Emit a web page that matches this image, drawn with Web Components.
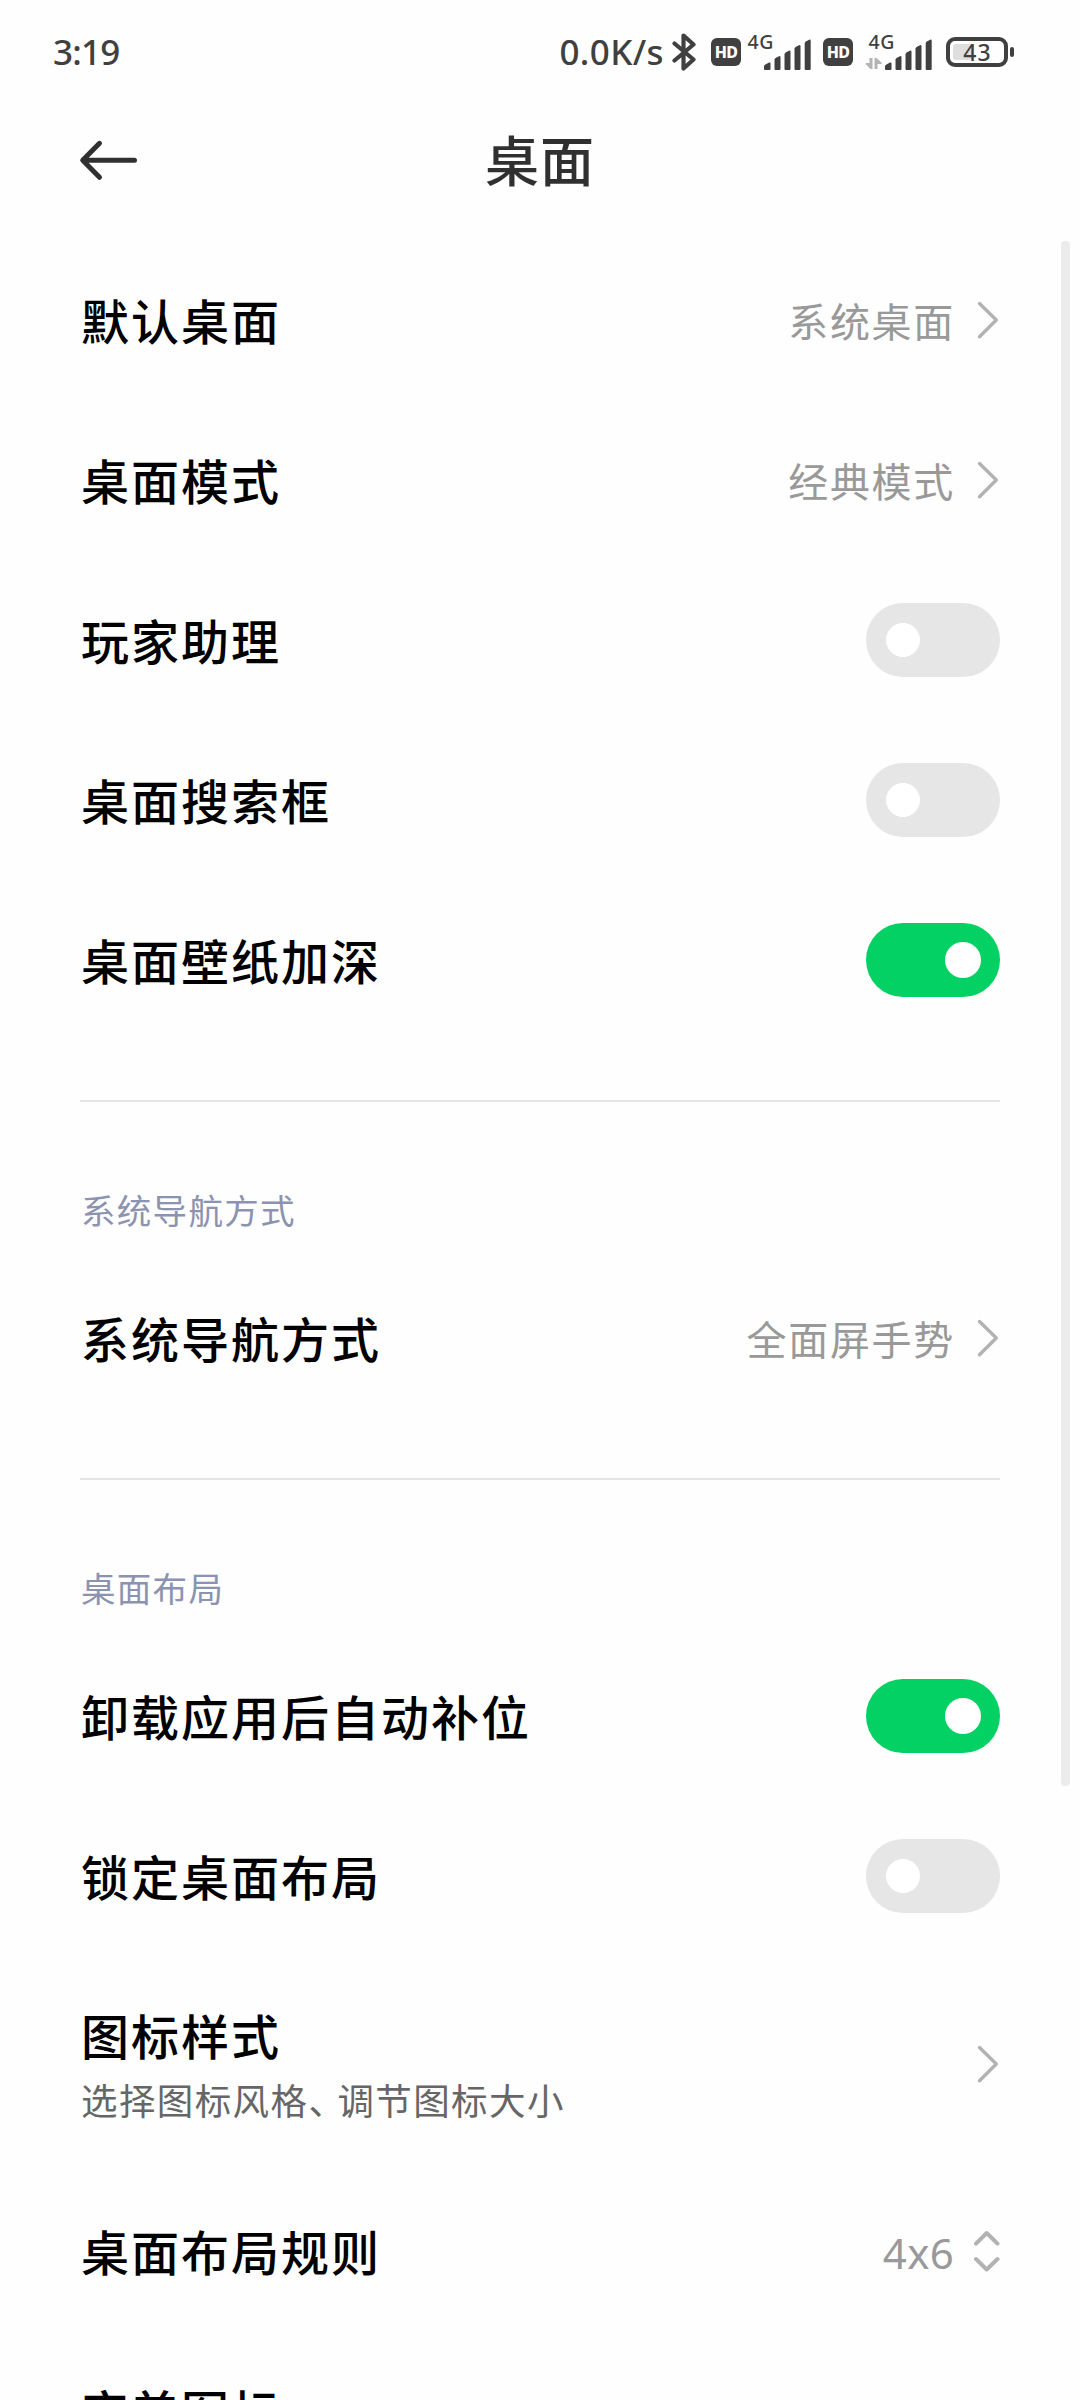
<!DOCTYPE html>
<html lang="zh-CN">
<head>
<meta charset="utf-8">
<title>桌面</title>
<style>
    html, body {
        margin: 0;
        height: 2400px;
        overflow: hidden;
        background: #fefefe;
        font-family: "Noto Sans", "Noto Sans CJK SC", sans-serif;
    }
</style>
</head>
<body>
<settings-page>
    <status-bar slot="status" time="3:19" speed="0.0K/s" battery="43"></status-bar>
    <title-bar slot="title">桌面</title-bar>

    <pref-group>
        <pref-row label="默认桌面" value="系统桌面" icon="chevron"></pref-row>
        <pref-row label="桌面模式" value="经典模式" icon="chevron"></pref-row>
        <pref-row label="玩家助理"><toggle-switch></toggle-switch></pref-row>
        <pref-row label="桌面搜索框"><toggle-switch></toggle-switch></pref-row>
        <pref-row label="桌面壁纸加深"><toggle-switch checked></toggle-switch></pref-row>
    </pref-group>

    <pref-group heading="系统导航方式">
        <pref-row label="系统导航方式" value="全面屏手势" icon="chevron"></pref-row>
    </pref-group>

    <pref-group heading="桌面布局">
        <pref-row label="卸载应用后自动补位"><toggle-switch checked></toggle-switch></pref-row>
        <pref-row label="锁定桌面布局"><toggle-switch></toggle-switch></pref-row>
        <pref-row label="图标样式" summary="选择图标风格、调节图标大小" icon="chevron"></pref-row>
        <pref-row label="桌面布局规则" value="4x6" icon="updown"></pref-row>
        <pref-row label="完美图标"></pref-row>
    </pref-group>
</settings-page>

<script>
class SettingsPage extends HTMLElement {
    constructor() {
        super();
        this.attachShadow({ mode: "open" });

        this.shadowRoot.innerHTML = `
            <style>
                :host {
                    display: flex;
                    flex-direction: column;
                    position: relative;
                    width: 1080px;
                    height: 2400px;
                    overflow: hidden;
                }

                .list {
                    flex: 1;
                    min-height: 0;
                    padding: 0 80px;
                    overflow: hidden;
                }

                .scrollbar {
                    position: absolute;
                    top: 241px;
                    right: 10px;
                    width: 9px;
                    height: 1545px;
                    border-radius: 4px;
                    background: #ececec;
                }
            </style>

            <slot name="status"></slot>
            <slot name="title"></slot>
            <div class="list"><slot></slot></div>
            <div class="scrollbar"></div>
        `;
    }
}

class HdBadge extends HTMLElement {
    constructor() {
        super();
        this.attachShadow({ mode: "open" });

        this.shadowRoot.innerHTML = `
            <style>
                :host {
                    display: flex;
                    align-items: center;
                    justify-content: center;
                    width: 30px;
                    height: 28px;
                    border-radius: 6px;
                    background: #404040;
                    color: #fefefe;
                    font-size: 16px;
                    font-weight: 800;
                    line-height: 28px;
                    letter-spacing: -0.8px;
                }
            </style>
            <span>HD</span>
        `;
    }
}

class SignalMeter extends HTMLElement {
    constructor() {
        super();
        this.attachShadow({ mode: "open" });

        this.shadowRoot.innerHTML = `
            <style>
                :host {
                    display: block;
                    position: relative;
                    width: 68px;
                    height: 40px;
                }

                span {
                    position: absolute;
                    left: 4px;
                    top: 0;
                    font-size: 19.5px;
                    font-weight: 500;
                    line-height: 22px;
                    letter-spacing: 0.5px;
                    color: #404040;
                }

                svg {
                    display: block;
                }

                .arrows {
                    display: none;
                }

                :host([data]) .arrows {
                    display: inline;
                }
            </style>

            <svg width="68" height="40" viewBox="0 0 68 40" fill="#404040">
                <path d="M20 38v-2.500q0-1.200 1-1.700l4-2.200q1.500-.6 1.500 1V38q0 1-1 1H21q-1 0-1-1z"/>
                <path d="M30.500 38V28.500l1-1.500 3.500-1.800q1.500-.4 1.500 1V38q0 1-1 1h-4q-1 0-1-1z"/>
                <path d="M40.500 38V23l1-1.500 3.500-1.800q1.500-.4 1.500 1V38q0 1-1 1h-4q-1 0-1-1z"/>
                <path d="M50.500 38V17.500l1-1.500 3.500-1.800q1.500-.4 1.500 1V38q0 1-1 1h-4q-1 0-1-1z"/>
                <path d="M60.700 38V12l1-1.500 3.500-1.800q1.500-.4 1.500 1V38q0 1-1 1h-4q-1 0-1-1z"/>
                <g class="arrows" fill="#b4b4b4">
                    <path d="M4.500 27h3v11h-2L.8 33.200V32h3.700z"/>
                    <path d="M9.500 38h3V33h4.200v-1.200L11.500 27h-2z"/>
                </g>
            </svg>
            <span>4G</span>
        `;
    }
}

class BatteryMeter extends HTMLElement {
    static get observedAttributes() {
        return ["level"];
    }

    constructor() {
        super();
        this.attachShadow({ mode: "open" });

        this.shadowRoot.innerHTML = `
            <style>
                :host {
                    display: flex;
                    align-items: center;
                    gap: 2px;
                }

                .case {
                    display: grid;
                    box-sizing: border-box;
                    width: 62px;
                    height: 30px;
                    padding: 3px;
                    border: 4px solid #404040;
                    border-radius: 9px;
                }

                .fill, .level {
                    grid-area: 1 / 1;
                }

                .fill {
                    width: 19px;
                    border-radius: 3px;
                    background: #dedede;
                }

                .level {
                    justify-self: center;
                    padding-left: 1px;
                    color: #404040;
                    font-size: 23px;
                    font-weight: 500;
                    line-height: 16px;
                    letter-spacing: 1px;
                }

                .tip {
                    width: 4px;
                    height: 10px;
                    border-radius: 2px;
                    background: #404040;
                }
            </style>

            <div class="case">
                <div class="fill"></div>
                <div class="level"></div>
            </div>
            <div class="tip"></div>
        `;
    }

    attributeChangedCallback(name, old, val) {
        this.shadowRoot.querySelector(".level").textContent = val;
    }
}

class StatusBar extends HTMLElement {
    constructor() {
        super();
        this.attachShadow({ mode: "open" });

        this.shadowRoot.innerHTML = `
            <style>
                :host {
                    display: flex;
                    align-items: center;
                    box-sizing: border-box;
                    height: 104px;
                    padding: 0 66px 0 53px;
                    color: #404040;
                    font-size: 35px;
                    font-weight: 500;
                    line-height: 40px;
                }

                .time {
                    letter-spacing: -0.8px;
                }

                .speed {
                    margin-left: auto;
                    letter-spacing: 0.4px;
                }

                .bluetooth {
                    margin: 0 14px 0 8px;
                }

                signal-meter {
                    margin: -2px 11.5px 0 2.5px;
                }

                signal-meter[data] {
                    margin: -2px 13.5px 0 11.5px;
                }
            </style>

            <span class="time"></span>
            <span class="speed"></span>
            <svg class="bluetooth" width="25" height="40" viewBox="0 0 25 40" fill="none" stroke="#404040" stroke-width="4.200" stroke-linecap="round" stroke-linejoin="round">
                <path d="M2.500 11.500L21.500 27.500 11.500 36.500V3.500L21.500 12.500 2.500 28.500"/>
            </svg>
            <hd-badge></hd-badge>
            <signal-meter></signal-meter>
            <hd-badge></hd-badge>
            <signal-meter data></signal-meter>
            <battery-meter></battery-meter>
        `;
    }

    connectedCallback() {
        this.shadowRoot.querySelector(".time").textContent = this.getAttribute("time");
        this.shadowRoot.querySelector(".speed").textContent = this.getAttribute("speed");
        this.shadowRoot.querySelector("battery-meter").setAttribute("level", this.getAttribute("battery"));
    }
}

class TitleBar extends HTMLElement {
    constructor() {
        super();
        this.attachShadow({ mode: "open" });

        this.shadowRoot.innerHTML = `
            <style>
                :host {
                    display: grid;
                    grid-template-columns: 1fr auto 1fr;
                    align-items: center;
                    height: 112px;
                    margin-bottom: 24px;
                    padding: 0 76px;
                    color: #303030;
                    font-size: 54px;
                    font-weight: 500;
                    line-height: 70px;
                    letter-spacing: 1px;
                }

                span {
                    padding-top: 2px;
                }
            </style>

            <svg width="64" height="44" viewBox="0 0 64 44" fill="none" stroke="#303030" stroke-width="5" stroke-linecap="round" stroke-linejoin="round">
                <path d="M58.500 22.300H7M23.500 5.300L6.700 22.300l16.800 17"/>
            </svg>
            <span><slot></slot></span>
        `;
    }
}

class PrefGroup extends HTMLElement {
    constructor() {
        super();
        this.attachShadow({ mode: "open" });

        this.shadowRoot.innerHTML = `
            <style>
                :host {
                    display: block;
                    padding-bottom: 60px;
                }

                .heading {
                    display: none;
                }

                :host([heading]) .heading {
                    display: block;
                    box-sizing: border-box;
                    height: 158px;
                    padding: 84px 0 0 1px;
                    border-top: 2px solid #e4e4e4;
                    color: #8b93b0;
                    font-size: 34.5px;
                    line-height: 50px;
                    letter-spacing: 1.3px;
                }
            </style>

            <div class="heading"></div>
            <slot></slot>
        `;
    }

    connectedCallback() {
        this.shadowRoot.querySelector(".heading").textContent = this.getAttribute("heading") || "";
    }
}

class PrefRow extends HTMLElement {
    constructor() {
        super();
        this.attachShadow({ mode: "open" });

        this.shadowRoot.innerHTML = `
            <style>
                :host {
                    display: flex;
                    align-items: center;
                    height: 160px;
                }

                :host([summary]) {
                    height: 215px;
                }

                .text {
                    flex: 1;
                    padding: 3px 0 0 1px;
                }

                .label {
                    color: #000;
                    font-size: 48px;
                    font-weight: 500;
                    line-height: 64px;
                    letter-spacing: 2px;
                }

                .summary {
                    margin-top: 7px;
                    color: #666;
                    font-size: 36.5px;
                    line-height: 50px;
                    letter-spacing: 1.4px;
                }

                .summary:empty, .value:empty {
                    display: none;
                }

                /* the enumeration comma is set narrower than a full em */
                .comma {
                    letter-spacing: -7.5px;
                }

                .value {
                    margin-right: 19px;
                    padding-top: 3px;
                    color: #999;
                    font-size: 40px;
                    line-height: 56px;
                    letter-spacing: 1.7px;
                }

                :host([icon="updown"]) .value {
                    margin-right: 18px;
                    font-size: 42px;
                    letter-spacing: 0.3px;
                }

                svg {
                    display: none;
                    fill: none;
                    stroke: #b2b2b2;
                    stroke-linecap: round;
                    stroke-linejoin: round;
                }

                :host([icon="chevron"]) .chevron,
                :host([icon="updown"]) .updown {
                    display: block;
                }
            </style>

            <div class="text">
                <div class="label"></div>
                <div class="summary"></div>
            </div>
            <div class="value"></div>
            <svg class="chevron" width="26" height="40" viewBox="0 0 26 40" stroke-width="3.400">
                <path d="M5.500 3.500L22.300 20 5.500 36.700"/>
            </svg>
            <svg class="updown" width="28" height="44" viewBox="0 0 28 44" stroke-width="4">
                <path d="M4 14.700L14.700 4l10.800 10.700M4 30L14.700 40.500 25.500 30"/>
            </svg>
            <slot></slot>
        `;
    }

    connectedCallback() {
        const get = name => this.getAttribute(name) || "";

        this.shadowRoot.querySelector(".label").textContent = get("label");
        this.shadowRoot.querySelector(".value").textContent = get("value");
        this.shadowRoot.querySelector(".summary").innerHTML = get("summary").replace("、", '<span class="comma">、</span>');
    }
}

class ToggleSwitch extends HTMLElement {
    constructor() {
        super();
        this.attachShadow({ mode: "open" });

        this.shadowRoot.innerHTML = `
            <style>
                :host {
                    display: flex;
                    align-items: center;
                    box-sizing: border-box;
                    width: 134px;
                    height: 74px;
                    padding: 0 20px;
                    border-radius: 37px;
                    background: #e6e6e6;
                }

                :host([checked]) {
                    justify-content: flex-end;
                    padding: 0 19px;
                    background: #03d164;
                }

                .thumb {
                    width: 34px;
                    height: 34px;
                    border-radius: 50%;
                    background: #fff;
                }

                :host([checked]) .thumb {
                    width: 36px;
                    height: 36px;
                }
            </style>

            <div class="thumb"></div>
        `;
    }
}

customElements.define("settings-page", SettingsPage);
customElements.define("hd-badge", HdBadge);
customElements.define("signal-meter", SignalMeter);
customElements.define("battery-meter", BatteryMeter);
customElements.define("status-bar", StatusBar);
customElements.define("title-bar", TitleBar);
customElements.define("pref-group", PrefGroup);
customElements.define("pref-row", PrefRow);
customElements.define("toggle-switch", ToggleSwitch);
</script>
</body>
</html>
